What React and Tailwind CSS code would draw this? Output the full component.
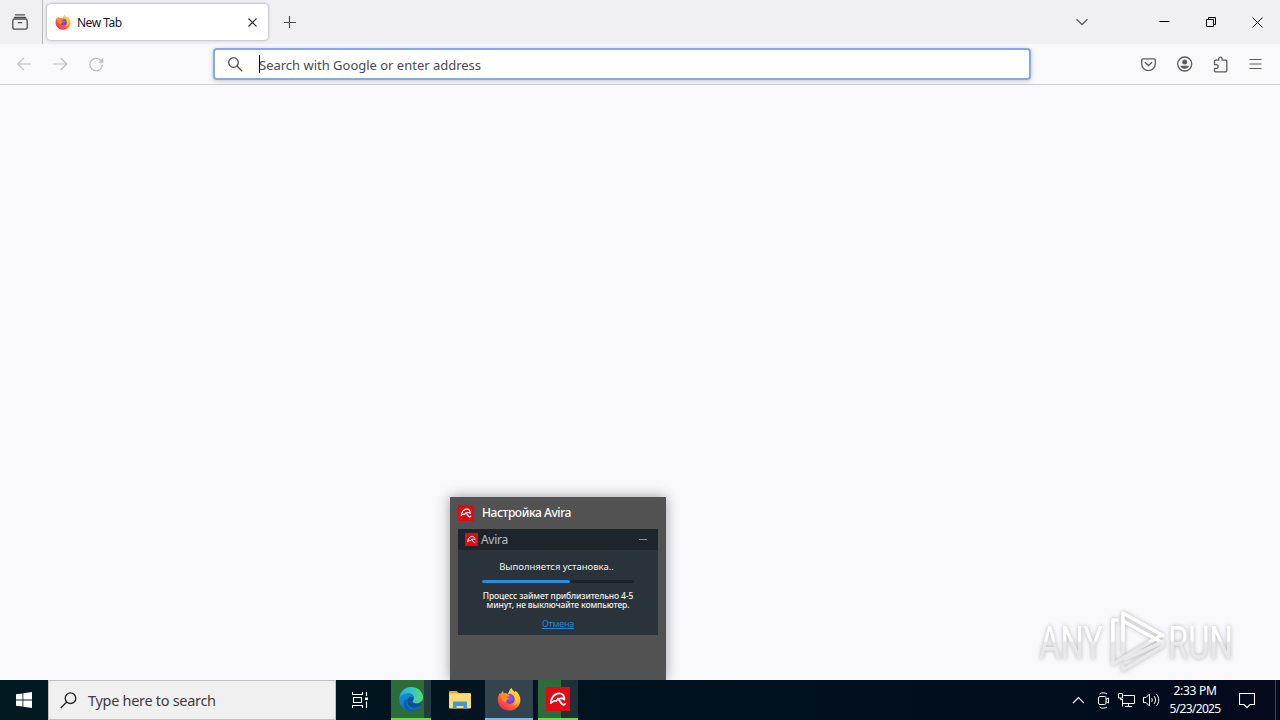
// src/App.jsx
import React from "react";

function FirefoxIcon({ size, id }) {
  return (
    <svg width={size} height={size} viewBox="0 0 24 24">
      <defs>
        <linearGradient id={id + "-body"} x1="0.85" y1="0.05" x2="0.2" y2="0.95">
          <stop offset="0" stopColor="#fff14a" />
          <stop offset="0.35" stopColor="#ffb52c" />
          <stop offset="0.62" stopColor="#ff6a2e" />
          <stop offset="1" stopColor="#f5235c" />
        </linearGradient>
        <radialGradient id={id + "-globe"} cx="0.5" cy="0.4" r="0.6">
          <stop offset="0" stopColor="#9059ff" />
          <stop offset="1" stopColor="#6a3fc4" />
        </radialGradient>
      </defs>
      <path
        d="M14.6 0.8c.5 2.2 2 3 3.4 4.5l.3-1.6c3 2 5.1 5.5 5.1 9.2 0 6-5 10.600-11.200 10.600C5.800 23.500.800 18.700.800 12.700c0-2.700.900-5 2.300-6.900l.4 1.500c.8-1.300 1.500-2.700 2.800-3.600-.2 1.100 0 1.900.5 2.600 1.300-.3 2.700-.1 3.900.6 1-2 2.100-4.500 3.900-6.100z"
        fill={"url(#" + id + "-body)"}
      />
      <circle cx="12.800" cy="12" r="4.900" fill={"url(#" + id + "-globe)"} />
      <path
        d="M3.500 7.300c2.200-1.300 5-1.400 7.200-.4.8.6 1.600 1.300 2.200 2.300-1.800-.3-2.700.6-3.100 1.300l2.400.6c0 1-1.700 1.100-2.600 1.900-.5.500-.2 1.500.4 2.100C6.500 16 3.500 11.800 3.500 7.300z"
        fill="#ff8a26"
      />
      <path d="M15 7c2.500 1.200 3.400 3.900 2.700 6.300 1.100-.9 1.300-2 1.200-3.100 1.300 3.300-.3 6.500-2.600 7.800C20 17.500 22.200 14 21 10c-.7-1.800-2.100-3.200-3-4.700-1.300-.4-2.500.3-3 1.700z" fill="#ffc832" />
    </svg>
  );
}

function AviraIcon({ size }) {
  return (
    <svg width={size} height={size} viewBox="0 0 24 24">
      <rect width="24" height="24" rx="0.500" fill="#e10a14" />
      <g fill="none" stroke="#fff" strokeLinejoin="round" strokeLinecap="round">
        <path d="M4.900 16C4.900 10.800 8.600 6.300 13.200 6.300c3.600 0 5.500 2.700 5.100 6.300-1.200-1.300-2.800-1.700-4.400-1-1.500 0-3 .8-3.700 2.400-2-.5-4 .3-5.300 2z" strokeWidth="1.800" />
        <path d="M12 11.500c1.700 2.300 2.900 4.600 4.200 5.600 1 .8 2.300.7 3.100-.3" strokeWidth="1.800" />
      </g>
    </svg>
  );
}

function EdgeIcon() {
  return (
    <svg width="26" height="26" viewBox="0 0 26 26">
      <defs>
        <linearGradient id="edge-top" x1="0" y1="0.5" x2="1" y2="0.400">
          <stop offset="0" stopColor="#25a8df" />
          <stop offset="0.500" stopColor="#32c4cf" />
          <stop offset="1" stopColor="#60dc63" />
        </linearGradient>
        <linearGradient id="edge-low" x1="0" y1="0" x2="0.700" y2="1">
          <stop offset="0" stopColor="#1391df" />
          <stop offset="1" stopColor="#0f66b4" />
        </linearGradient>
      </defs>
      <circle cx="12.800" cy="13.500" r="11" fill="#0d5291" />
      <path d="M1.200 14C1 6.400 6.500 1 13 1c7 0 12 4.900 12 10.300 0 3.600-2.700 6-5.900 6-3 0-4.600-1.100-4.600-2.100 0-.8 1.300-1.200 1.300-3.300 0-2.400-2.200-4.500-5.500-4.500-4.800 0-8.200 3-9.100 6.600z" fill="url(#edge-top)" />
      <path d="M1.200 14.300C1.200 10 5 7.400 9.500 7.400c3.500 0 6.200 2 6.300 4.600-1-1.200-2.300-1.500-3.400-1.200-2 .5-3.100 2.700-3.100 5 0 4.500 5.400 7.800 11.500 4.500 1-.5 1.900-.2 1.200.7C20.200 23.600 16.900 25 13.400 25 6.700 25 1.400 20.300 1.200 14.300z" fill="url(#edge-low)" />
      <path d="M9.500 13.500c-2.600 3.800.1 10 5.700 11.300C10 25.700 5.700 22 5.700 17.500c0-2.200 1.600-4 3.800-4z" fill="#0b5ba8" />
    </svg>
  );
}

function TabBar() {
  return (
    <div className="flex h-[44px] bg-[#f0f0f4] text-[#2b2a33]">
      <div className="w-[43px] border-r border-[#b9b9bf] flex items-center pl-[12px]">
        <svg width="16" height="16" viewBox="0 0 16 16" fill="none" stroke="#4b4a53" strokeWidth="1.300" strokeLinecap="round">
          <path d="M3.500.800h9M2.300 3.300h11.400" />
          <rect x="0.800" y="5" width="14.400" height="10.200" rx="1.800" />
          <path d="M6.300 8.700h3.400" />
        </svg>
      </div>
      <div className="ml-[4px] mt-[4px] w-[221px] h-[36px] rounded-[4px] bg-white shadow-[0_0_3px_rgba(0,0,0,0.400)] flex items-center pl-[8px] pr-[11px]">
        <FirefoxIcon size={16} id="tab" />
        <span className="ml-[6px] mt-[2px] flex-1 text-[12px] leading-[16px] tracking-[-0.500px] text-[#15141a]">New Tab</span>
        <svg width="9" height="9" viewBox="0 0 9 9" stroke="#2b2a33" strokeWidth="1.100">
          <path d="M.5.500l8 8M8.500.500l-8 8" />
        </svg>
      </div>
      <div className="ml-[16px] flex items-center">
        <svg width="12" height="12" viewBox="0 0 12 12" stroke="#4b4a53" strokeWidth="1.200">
          <path d="M5.500 0v12M0 6.500h12" />
        </svg>
      </div>
      <div className="ml-auto flex items-center pr-[17px]">
        <svg className="mr-[70px]" width="14" height="8" viewBox="0 0 14 8" fill="none" stroke="#5b5b66" strokeWidth="1.300">
          <path d="M1.500 1.200 7 6.500l5.500-5.300" />
        </svg>
        <svg className="mr-[36px]" width="11" height="11" viewBox="0 0 11 11" stroke="#000">
          <path d="M.5 4.500h10" />
        </svg>
        <svg className="mr-[36px]" width="10" height="10" viewBox="0 0 10 10" fill="none" stroke="#000">
          <path d="M.5 2.500h7v7h-7zM2.500 2.500v-2h7v7h-2" />
        </svg>
        <svg width="11" height="11" viewBox="0 0 11 11" stroke="#000">
          <path d="M.5.500l10 10M10.500.500l-10 10" />
        </svg>
      </div>
    </div>
  );
}

function Toolbar() {
  return (
    <div className="flex items-start h-[41px] bg-[#f9f9fb] border-b border-[#cccccf]">
      <div className="flex items-center gap-[21px] w-[213px] h-[40px] pl-[17px] text-[#bdbdc3]">
        <svg width="15" height="14" viewBox="0 0 15 14" fill="none" stroke="currentColor" strokeWidth="1.200" strokeLinecap="round" strokeLinejoin="round">
          <path d="M13.500 7H.800M6.500 1.300.800 7l5.700 5.700" />
        </svg>
        <svg width="15" height="14" viewBox="0 0 15 14" fill="none" stroke="currentColor" strokeWidth="1.200" strokeLinecap="round" strokeLinejoin="round">
          <path d="M.8 7h13M8 1.300 13.800 7 8 12.700" />
        </svg>
        <svg width="15" height="15" viewBox="0 0 15 15" fill="none" stroke="currentColor" strokeWidth="1.300" strokeLinecap="round">
          <path d="M13.300 8.300A6.200 6.200 0 1 1 11.300 3l1.400 1.300" />
          <path d="M14.300.800v4.900H9.400z" fill="currentColor" stroke="none" />
        </svg>
      </div>
      <div className="mt-[4px] w-[818px] h-[32px] rounded-[4px] border-2 border-[#80abe6] bg-white shadow-[0_1px_4px_rgba(0,0,0,0.220)] flex items-center pl-[13px]">
        <svg width="15" height="15" viewBox="0 0 15 15" fill="none" stroke="#4b4a53" strokeWidth="1.300" strokeLinecap="round">
          <circle cx="5.500" cy="5.500" r="4.800" />
          <path d="M9.200 9.200l4.600 4.500" />
        </svg>
        <div className="ml-[16px] h-[18px] w-px bg-black" />
        <span className="mt-[2px] -ml-px text-[13px] leading-[18px] tracking-[-0.010px] whitespace-nowrap text-[#4a4952]">Search with Google or enter address</span>
      </div>
      <div className="ml-auto flex items-center gap-[20px] h-[40px] pr-[18px] text-[#5b5b66]">
        <svg className="-ml-px mr-px" width="15" height="13" viewBox="0 0 15 13" fill="none" stroke="currentColor" strokeWidth="1.300" strokeLinecap="round" strokeLinejoin="round">
          <path d="M2 .800h11c.800 0 1.300.500 1.300 1.300v3.700a6.500 6.500 0 0 1-13.600 0V2.100C.700 1.300 1.200.800 2 .800z" />
          <path d="M4.200 4.600l3.300 3 3.300-3" />
        </svg>
        <svg width="16" height="16" viewBox="0 0 16 16" fill="none" stroke="currentColor" strokeWidth="1.300">
          <circle cx="7.700" cy="8" r="7" />
          <circle cx="7.700" cy="6" r="2.500" fill="currentColor" stroke="none" />
          <path d="M3.500 9.800h8.400c0 1.700-1.800 2.900-4.200 2.900s-4.200-1.200-4.200-2.900z" fill="currentColor" stroke="none" />
        </svg>
        <svg width="16" height="17" viewBox="0 0 16 17" fill="none" stroke="currentColor" strokeWidth="1.300" strokeLinejoin="round">
          <path d="M1.500 7.500V5.200c0-.600.400-1 1-1h3.200V2.800a1.700 1.700 0 0 1 3.400 0v1.400h3.700c.600 0 1 .400 1 1v9.600c0 .600-.4 1-1 1H2.500c-.600 0-1-.4-1-1v-2.400h1.800a1.800 1.800 0 0 0 0-3.700H1.500z" />
        </svg>
        <svg width="13" height="11" viewBox="0 0 13 11" stroke="currentColor" strokeWidth="1.200">
          <path d="M.5.500h12M.5 5h12M.5 9.500h12" />
        </svg>
      </div>
    </div>
  );
}

function TaskPreview() {
  return (
    <div className="absolute left-[450px] bottom-0 w-[216px] h-[183px] bg-[#525252] px-[8px] shadow-[0_0_12px_rgba(0,0,0,0.380)]">
      <div className="flex items-center h-[32px] text-white">
        <AviraIcon size={16} />
        <span className="ml-[8px] text-[12px] font-medium tracking-[-0.420px] whitespace-nowrap">Настройка Avira</span>
      </div>
      <div className="h-[106px] bg-[#2b333a] text-center text-[#f0f2f3]">
        <div className="flex items-center h-[21px] bg-[#1d252b] pl-[7px] pr-[11px]">
          <AviraIcon size={13} />
          <span className="ml-[3px] text-[12px] tracking-[-0.300px] text-[#b9bec2]">Avira</span>
          <div className="ml-auto w-[8px] h-px bg-[#8d9499]" />
        </div>
        <div className="pt-[11px] pr-[3px] text-[9.500px] leading-[12px] whitespace-nowrap">Выполняется установка..</div>
        <div className="mt-[7px] ml-[24px] w-[152px] h-[3px] rounded-full bg-[#1b2329]">
          <div className="w-[88px] h-[3px] rounded-full bg-[#2490e2]" />
        </div>
        <div className="mt-[8px] text-[8.500px] leading-[9px] tracking-[-0.120px] font-medium whitespace-nowrap">
          Процесс займет приблизительно 4-5
          <br />
          минут, не выключайте компьютер.
        </div>
        <div className="mt-[9px] text-[9px] leading-[11px] tracking-[-0.200px] underline text-[#2187d2]">Отмена</div>
      </div>
    </div>
  );
}

function Watermark() {
  return (
    <svg className="absolute left-[1030px] bottom-[4px] overflow-visible drop-shadow-[0_0_2px_rgba(0,0,0,0.280)]" width="210" height="72" viewBox="0 0 210 72">
      <defs>
        <linearGradient id="wm" x1="0" y1="0" x2="0" y2="72" gradientUnits="userSpaceOnUse">
          <stop offset="0.500" stopColor="#ffffff" />
          <stop offset="0.540" stopColor="#e8e8eb" />
        </linearGradient>
      </defs>
      <g fill="url(#wm)" fontFamily="Roboto, sans-serif" fontSize="47" fontWeight="400">
        <text x="9" y="55" textLength="64" lengthAdjust="spacingAndGlyphs">ANY</text>
        <text x="138" y="55" textLength="65" lengthAdjust="spacingAndGlyphs">RUN</text>
      </g>
      <g fill="none" stroke="url(#wm)" strokeWidth="3.600" strokeLinejoin="round" strokeLinecap="round">
        <path d="M93 48V9l40 22.500M93 17l38 21M87 16h-4v44l47-28M93 62v4l40-24v-4l-38 17" />
      </g>
    </svg>
  );
}

function Taskbar() {
  return (
    <div className="flex h-[40px] bg-linear-to-r from-[#001a22] to-[#020a1c] text-white">
      <div className="w-[48px] flex items-center pl-[16px]">
        <svg width="16" height="16" viewBox="0 0 16 16" fill="#fff">
          <path d="M0 2.300l6.500-.9v6.200H0zM7.300 1.300 16 0v7.600H7.300zM0 8.400h6.500v6.200L0 13.700zM7.300 8.400H16V16l-8.700-1.300z" />
        </svg>
      </div>
      <div className="w-[288px] border border-[#bfbfbf] bg-[#f0f0f0] flex items-center pl-[11px]">
        <svg width="17" height="17" viewBox="0 0 17 17" fill="none" stroke="#222" strokeWidth="1.300">
          <circle cx="10.500" cy="6.200" r="5.300" />
          <path d="M6.700 10 .800 16" />
        </svg>
        <span className="ml-[11px] mt-[1px] text-[14.500px] tracking-[-0.300px] whitespace-nowrap text-[#3c3c3c]">Type here to search</span>
      </div>
      <div className="w-[55px] flex items-center pl-[16px]">
        <svg width="17" height="16" viewBox="0 0 17 16" fill="none" stroke="#fff" strokeWidth="1.100">
          <path d="M.5 0v2.500h10V0M.5 16v-2.500h10V16M1.500 5.500h8v5h-8zM14.500 0v4M14.500 9.500V16" />
          <path d="M13 5.500h3v2.500h-3z" fill="#fff" stroke="none" />
        </svg>
      </div>
      <div className="w-[40px] flex items-center justify-center border-b-2 border-[#66dc46] bg-[linear-gradient(90deg,#2c6b3a_33px,#223b40_33px)]">
        <EdgeIcon />
      </div>
      <div className="w-[54px] flex items-center pl-[18px]">
        <svg width="22" height="20" viewBox="0 0 22 20">
          <path d="M0 2c0-.600.400-1 1-1h7l1.500 2H21c.600 0 1 .400 1 1v3H0z" fill="#e8a51f" />
          <rect y="3.500" width="22" height="15" rx="0.700" fill="#fcdb78" />
          <path d="M4 19v-6.500c0-.600.400-1 1-1h12c.600 0 1 .400 1 1V19h-3.500v-3h-7v3z" fill="#3f9ad6" />
        </svg>
      </div>
      <div className="w-[48px] flex items-center justify-center border-b-2 border-[#76b9ed] bg-[#34444e]">
        <FirefoxIcon size={24} id="task" />
      </div>
      <div className="ml-[5px] w-[40px] flex items-center justify-center border-b-2 border-[#66dc46] bg-[linear-gradient(90deg,#2c6b3a_23px,#203039_23px)]">
        <AviraIcon size={24} />
      </div>
      <div className="ml-auto flex items-center">
        <svg className="mr-[12px]" width="12" height="8" viewBox="0 0 12 8" fill="none" stroke="#fff" strokeWidth="1.200">
          <path d="M1 7l5.500-5.500L12 7" />
        </svg>
        <svg className="mr-[9px]" width="13" height="17" viewBox="0 0 13 17" fill="none" stroke="#fff">
          <rect x="2.500" y="4.500" width="7.500" height="8" rx="1.500" />
          <path d="M10 7.500l2.500-1.500v5L10 9.500M3.500 2C5.500.400 9 .400 11 2M3.500 15c2 1.600 5.500 1.600 7.500 0" />
        </svg>
        <svg className="mr-[8px]" width="17" height="14" viewBox="0 0 17 14" fill="none" stroke="#fff">
          <path d="M5.500 2.500h11v8H4.500M4.500 6v7.500M10.500 10.500v3M7 13.500h7M.5.500h4v4.500h-4zM2.500 5v1.500h2" />
        </svg>
        <svg width="17" height="14" viewBox="0 0 17 14" fill="none" stroke="#fff">
          <path d="M.5 4.500h2.500L6.500 1v12L3 9.500H.5zM8.500 5c1 1.200 1 2.800 0 4M11 3c2 2.500 2 5.500 0 8M13.500 1.200c3 3.500 3 8.100 0 11.600" />
        </svg>
        <div className="w-[70px] text-center text-[12px] leading-[18px]">
          <div className="tracking-[-0.300px]">2:33 PM</div>
          <div className="tracking-[-0.650px]">5/23/2025</div>
        </div>
        <svg className="ml-[9px] mr-[20px]" width="16" height="17" viewBox="0 0 16 17" fill="none" stroke="#fff" strokeWidth="1.100">
          <path d="M.5 1.500h15v11h-4.500L8 15.700 5 12.500H.5z" />
        </svg>
        <div className="mr-[4px] w-px h-[40px] bg-[#3f4652]" />
      </div>
    </div>
  );
}

export default function App() {
  return (
    <div className="w-[1280px] h-[720px] flex flex-col overflow-hidden bg-[#f9f9fd] font-['Noto_Sans','Open_Sans',sans-serif]">
      <TabBar />
      <Toolbar />
      <main className="relative flex-1 overflow-hidden">
        <TaskPreview />
        <Watermark />
      </main>
      <Taskbar />
    </div>
  );
}
